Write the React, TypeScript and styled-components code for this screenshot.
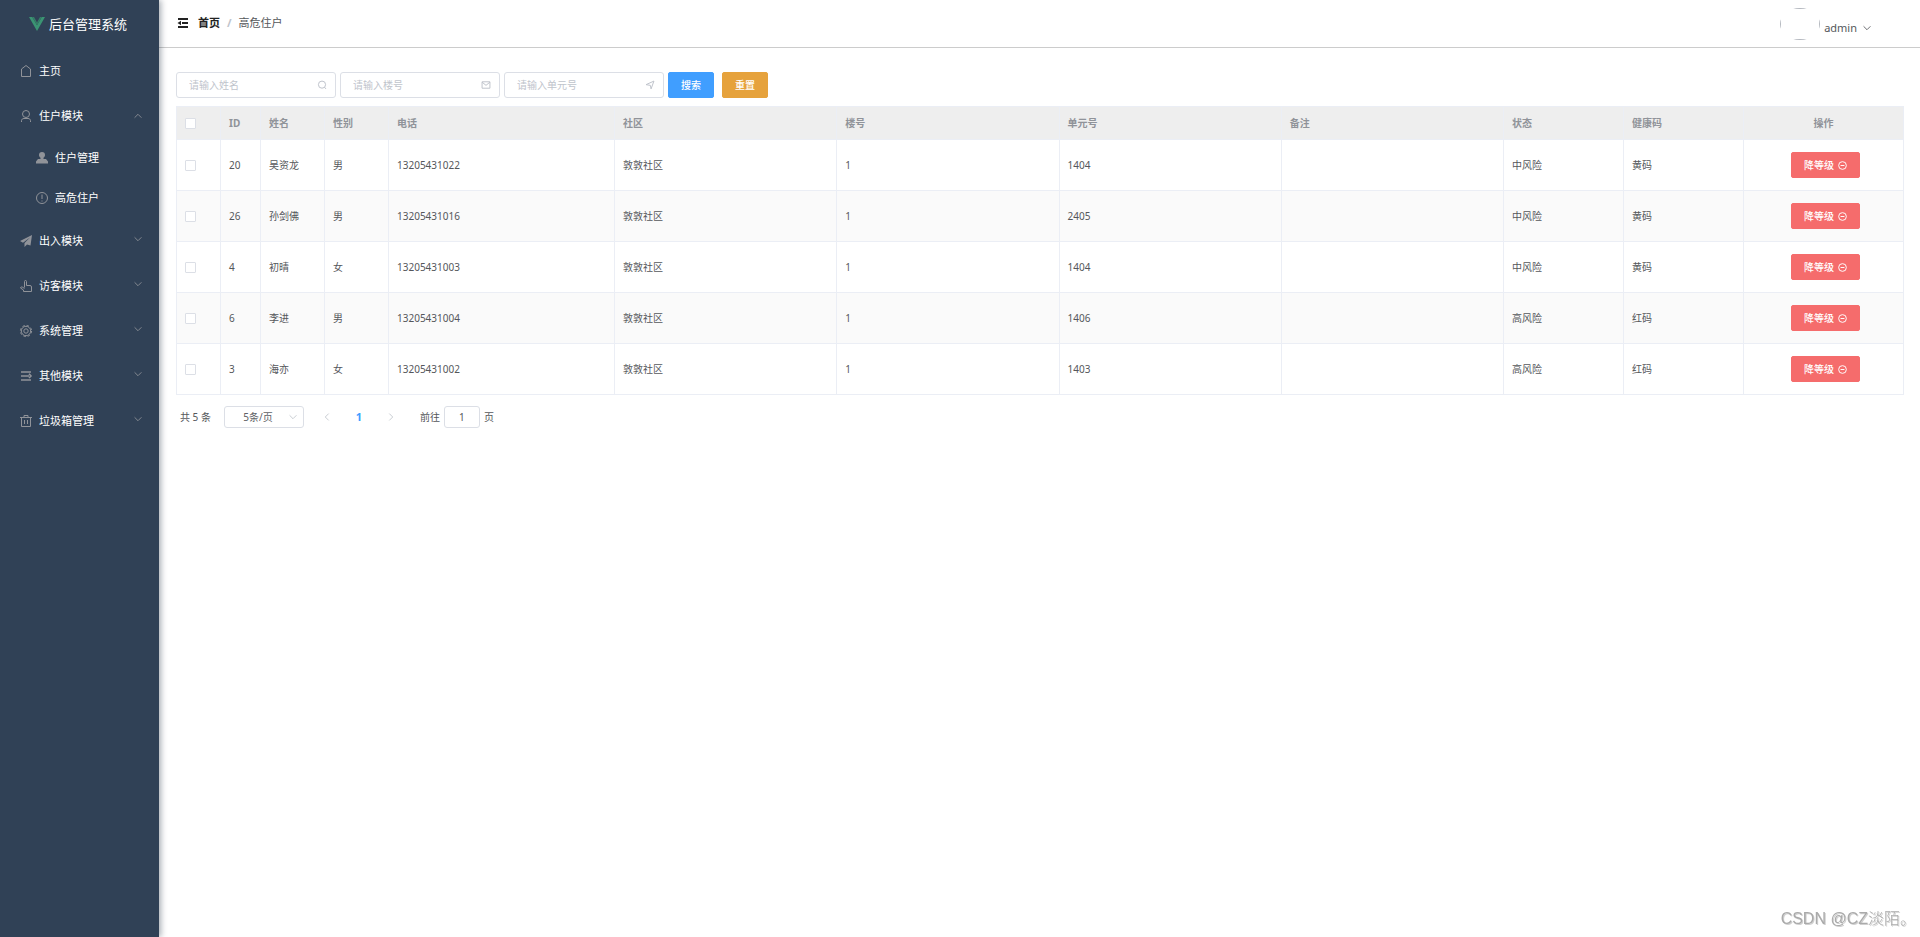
import React, { useState } from 'react';
import styled, { createGlobalStyle } from 'styled-components';

const GlobalStyle = createGlobalStyle`
  *, *::before, *::after { box-sizing: border-box; }
  html, body { margin: 0; padding: 0; }
  body {
    font-family: "Noto Sans", "Noto Sans CJK SC", sans-serif;
    font-size: 10px;
    line-height: 16px;
    color: #55575b;
    background: #fff;
  }
  button, input, select { font: inherit; color: inherit; margin: 0; }
  ul { list-style: none; margin: 0; padding: 0; }
  a { color: inherit; text-decoration: none; }
`;

/* ---------- icons ---------- */

const Svg = styled.svg<{ $size: number }>`
  display: block;
  flex: none;
  width: ${p => p.$size}px;
  height: ${p => p.$size}px;
  fill: none;
  stroke: currentColor;
  stroke-width: 1;
`;

type IconName =
  | 'home' | 'user' | 'userSolid' | 'warning' | 'promotion' | 'pointer' | 'setting'
  | 'operation' | 'trash' | 'up' | 'down' | 'left' | 'right' | 'search' | 'message'
  | 'position' | 'remove' | 'fold';

const solid = { fill: 'currentColor', stroke: 'none' };

const shapes: Record<IconName, React.ReactNode> = {
  home: <path d="M2.500 12.500V5L7 1.500 11.500 5v7.500z" />,
  user: (
    <>
      <circle cx="7" cy="5" r="3.500" />
      <path d="M2.500 13v-1.500c0-1 1-2 2.500-2h4c1.500 0 2.500 1 2.500 2V13" />
    </>
  ),
  userSolid: (
    <path {...solid} d="M7 1a3 3 0 0 1 3 3c0 1.300-.6 2.100-1.500 2.800V8H11l2 2.500V12.500H1V10.500L3 8h2.500V6.800C4.600 6.100 4 5.300 4 4a3 3 0 0 1 3-3z" />
  ),
  warning: (
    <>
      <circle cx="7" cy="7" r="5.500" />
      <path d="M7 3.500v4.500M7 9.500v1" />
    </>
  ),
  promotion: <path {...solid} d="M1 7 13 1l-1.500 10.500-3.500-1L5.500 13V9L11 3.500 4 8.800z" />,
  pointer: (
    <path d="M5.500 8.500V2.500a1 1 0 0 1 2 0v4h3.500a1.500 1.500 0 0 1 1.500 1.500v4.500h-8V11L1.500 9c0-1 1.500-1.500 2.500-.5l1.500 1" />
  ),
  setting: (
    <>
      <circle cx="7" cy="7" r="5.600" strokeDasharray="2.400 2" />
      <circle cx="7" cy="7" r="4.700" />
      <circle cx="7" cy="7" r="2.200" />
    </>
  ),
  operation: <path strokeWidth="1.600" d="M2 3h10M2 7h8M2 11h10M10 4.800 12 7l-2 2" />,
  trash: <path d="M1 3.500h12M5 3V1.500h4V3M2.500 3.500v9h9v-9M5.500 6v4M8.500 6v4" />,
  up: <path d="M3 9l4-4 4 4" />,
  down: <path d="M3 5l4 4 4-4" />,
  left: <path d="M9 3L5 7l4 4" />,
  right: <path d="M5 3l4 4-4 4" />,
  search: (
    <>
      <circle cx="7" cy="6.500" r="5" strokeWidth="1.400" />
      <path strokeWidth="1.400" d="M10.500 10l2 2.500" />
    </>
  ),
  message: <path strokeWidth="1.400" d="M1.500 2.500h11v9h-11zM1.500 3l5.500 4.500L12.500 3" />,
  position: <path strokeWidth="1.400" d="M1.500 6.500L12.500 1.500 8.500 12.500 7.500 7.500z" />,
  remove: (
    <>
      <circle cx="7" cy="7" r="6" strokeWidth="1.500" />
      <path strokeWidth="1.500" d="M4 7h6" />
    </>
  ),
  fold: (
    <>
      <path strokeWidth="2" d="M2 3h10M6 7h6M2 11h10" />
      <path {...solid} d="M1.500 7 5 4.800v4.400z" />
    </>
  ),
};

const Icon = ({ name, size = 14 }: { name: IconName; size?: number }) => (
  <Svg $size={size} viewBox="0 0 14 14" aria-hidden="true">{shapes[name]}</Svg>
);

/* ---------- shell ---------- */

const Shell = styled.div`
  display: flex;
  min-height: 100vh;
`;

const Sidebar = styled.aside`
  flex: none;
  width: 159px;
  background: #304156;
  box-shadow: 2px 0 6px rgba(0, 21, 41, 0.35);
  color: #fff;
  z-index: 1;
`;

const Brand = styled.div`
  display: flex;
  align-items: center;
  justify-content: center;
  gap: 4px;
  height: 48px;
  font-size: 13px;
  line-height: 20px;
  padding-right: 3px;
`;

const BrandMark = styled.svg`
  display: block;
  width: 16px;
  height: 14px;
`;

const MenuLink = styled.a<{ $nested?: boolean }>`
  display: flex;
  align-items: center;
  gap: 4px;
  height: ${p => (p.$nested ? 40 : 45)}px;
  padding: 0 15px 0 ${p => (p.$nested ? 32 : 16)}px;
  font-size: 11px;
`;

const MenuIcon = styled.span`
  display: flex;
  justify-content: center;
  width: 19px;
  color: #909399;
`;

const MenuArrow = styled.span<{ $open?: boolean }>`
  margin-left: auto;
  padding-bottom: ${p => (p.$open ? 0 : 4)}px;
  color: #909399;
`;

const Main = styled.div`
  flex: 1;
  min-width: 0;
`;

const Topbar = styled.header`
  display: flex;
  align-items: center;
  justify-content: space-between;
  height: 48px;
  padding: 0 47px 0 17px;
  border-bottom: 1px solid #ccc;
  font-size: 11px;
`;

const Crumbs = styled.nav`
  display: flex;
  align-items: center;
  padding-bottom: 2px;
`;

const FoldButton = styled.button`
  margin-right: 8px;
  padding: 0;
  border: 0;
  background: none;
  color: #222;
`;

const CrumbHome = styled.a`
  font-weight: 700;
  color: #222;
`;

const Slash = styled.span`
  margin: 0 7px;
  font-weight: 700;
  color: #c0c4cc;
`;

const UserMenu = styled.button`
  display: flex;
  align-items: center;
  gap: 4px;
  padding: 0;
  border: 0;
  background: none;
`;

const Avatar = styled.span`
  display: flex;
  width: 40px;
  height: 32px;
  border-radius: 50%;
  overflow: hidden;
`;

const AvatarFrame = styled.span`
  flex: 1;
  border: 1px solid #b4b8bf;
`;

const UserName = styled.span`
  display: flex;
  align-items: center;
  gap: 4px;
  padding-top: 8px;
`;

const Content = styled.main`
  padding: 24px 16px 24px 17px;
`;

/* ---------- filter bar ---------- */

const Filters = styled.form`
  display: flex;
  gap: 4px;
  margin-bottom: 8px;
`;

const Field = styled.label`
  display: flex;
  align-items: center;
  width: 160px;
  height: 26px;
  padding: 0 8px 0 12px;
  border: 1px solid #dcdfe6;
  border-radius: 3px;
  color: #c0c4cc;
`;

const FieldInput = styled.input`
  flex: 1;
  min-width: 0;
  padding: 0;
  border: 0;
  outline: 0;
  background: none;
  color: #606266;
  &::placeholder { color: #c0c4cc; opacity: 1; }
`;

const tones = { primary: '#409eff', warning: '#e6a23c', danger: '#f56c6c' };

const Button = styled.button<{ $tone: keyof typeof tones }>`
  display: inline-flex;
  align-items: center;
  gap: 4px;
  height: 26px;
  padding: 0 12px;
  border: 1px solid ${p => tones[p.$tone]};
  border-radius: 2px;
  background: ${p => tones[p.$tone]};
  color: #fff;
  font-weight: 500;
  & + & { margin-left: 4px; }
`;

/* ---------- table ---------- */

const Table = styled.table`
  width: 100%;
  table-layout: fixed;
  border-collapse: separate;
  border-spacing: 0;
  border-top: 1px solid #ebeef5;
  border-left: 1px solid #ebeef5;
`;

const Col = styled.col<{ $width?: number }>`
  ${p => p.$width && `width: ${p.$width}px;`}
`;

const HeadCell = styled.th<{ $center?: boolean }>`
  height: 33px;
  padding: 0 8px;
  border-right: 1px solid #ebeef5;
  border-bottom: 1px solid #ebeef5;
  background: #eee;
  color: #909399;
  font-weight: 700;
  text-align: ${p => (p.$center ? 'center' : 'left')};
`;

const Cell = styled.td<{ $center?: boolean }>`
  height: 51px;
  padding: 0 8px;
  border-right: 1px solid #ebeef5;
  border-bottom: 1px solid #ebeef5;
  text-align: ${p => (p.$center ? 'center' : 'left')};
`;

const Row = styled.tr`
  &:nth-child(even) { background: #fafafa; }
`;

const Check = styled.input.attrs({ type: 'checkbox' })`
  appearance: none;
  display: block;
  width: 11px;
  height: 11px;
  border: 1px solid #dcdfe6;
  border-radius: 1px;
  background: #fff;
  &:checked { background: #409eff; border-color: #409eff; }
`;

const Action = styled.div`
  display: flex;
  justify-content: center;
  padding-left: 4px;
`;

/* ---------- pagination ---------- */

const Pager = styled.nav`
  display: flex;
  align-items: center;
  margin-top: 11px;
  padding-left: 4px;
`;

const SizeBox = styled.div`
  display: grid;
  align-items: center;
  margin: 0 12px 0 13px;
  color: #c0c4cc;
  & > * { grid-area: 1 / 1; }
  & > svg { justify-self: end; margin-right: 5px; pointer-events: none; }
`;

const SizeSelect = styled.select`
  appearance: none;
  width: 80px;
  height: 22px;
  padding: 0 20px 0 8px;
  border: 1px solid #dcdfe6;
  border-radius: 3px;
  background: #fff;
  color: #606266;
  text-align: center;
  text-align-last: center;
`;

const PageButton = styled.button<{ $active?: boolean }>`
  display: flex;
  align-items: center;
  justify-content: center;
  width: 22px;
  height: 22px;
  padding: 0;
  border: 0;
  background: none;
  font-size: 11px;
  font-weight: 700;
  color: ${p => (p.$active ? '#409eff' : '#c0c4cc')};
`;

const PageList = styled.div`
  display: flex;
  gap: 10px;
  margin-right: 18px;
`;

const Jump = styled.label`
  display: flex;
  align-items: center;
  gap: 4px;
`;

const JumpInput = styled.input`
  width: 36px;
  height: 22px;
  padding: 0 2px;
  border: 1px solid #dcdfe6;
  border-radius: 3px;
  text-align: center;
`;

const Watermark = styled.div`
  position: fixed;
  right: 4px;
  bottom: 6px;
  font-family: "Liberation Sans", "Noto Sans CJK SC", sans-serif;
  font-size: 16px;
  font-weight: 300;
  line-height: 24px;
  color: #aaa;
  text-shadow: 1px 1px 0 rgba(120, 120, 120, 0.35);
`;

/* ---------- data ---------- */

const menu: { icon: IconName; label: string; open?: boolean; leaf?: boolean; children?: { icon: IconName; label: string }[] }[] = [
  { icon: 'home', label: '主页', leaf: true },
  {
    icon: 'user', label: '住户模块', open: true,
    children: [
      { icon: 'userSolid', label: '住户管理' },
      { icon: 'warning', label: '高危住户' },
    ],
  },
  { icon: 'promotion', label: '出入模块' },
  { icon: 'pointer', label: '访客模块' },
  { icon: 'setting', label: '系统管理' },
  { icon: 'operation', label: '其他模块' },
  { icon: 'trash', label: '垃圾箱管理' },
];

const columns: { title: string; width?: number }[] = [
  { title: 'ID', width: 40 },
  { title: '姓名', width: 64 },
  { title: '性别', width: 64 },
  { title: '电话', width: 226 },
  { title: '社区' },
  { title: '楼号' },
  { title: '单元号' },
  { title: '备注' },
  { title: '状态', width: 120 },
  { title: '健康码', width: 120 },
];

const residents = [
  ['20', '吴资龙', '男', '13205431022', '敦敦社区', '1', '1404', '', '中风险', '黄码'],
  ['26', '孙剑佛', '男', '13205431016', '敦敦社区', '1', '2405', '', '中风险', '黄码'],
  ['4', '初晴', '女', '13205431003', '敦敦社区', '1', '1404', '', '中风险', '黄码'],
  ['6', '李进', '男', '13205431004', '敦敦社区', '1', '1406', '', '高风险', '红码'],
  ['3', '海亦', '女', '13205431002', '敦敦社区', '1', '1403', '', '高风险', '红码'],
];

const filters: { label: string; icon: IconName }[] = [
  { label: '请输入姓名', icon: 'search' },
  { label: '请输入楼号', icon: 'message' },
  { label: '请输入单元号', icon: 'position' },
];

export default function App() {
  const [page, setPage] = useState('1');

  return (
    <>
      <GlobalStyle />
      <Shell>
        <Sidebar>
          <Brand>
            <BrandMark viewBox="0 0 16 14" aria-hidden="true">
              <path fill="#3b9473" d="M0 0h3.200L8 8.300 12.800 0H16L8 14z" />
              <path fill="#357f68" d="M3.200 0H5L8 5.500 11 0h1.800L8 8.300z" />
            </BrandMark>
            后台管理系统
          </Brand>
          <ul>
            {menu.map(item => (
              <li key={item.label}>
                <MenuLink href="#">
                  <MenuIcon><Icon name={item.icon} /></MenuIcon>
                  {item.label}
                  {!item.leaf && (
                    <MenuArrow $open={item.open}>
                      <Icon name={item.open ? 'up' : 'down'} size={12} />
                    </MenuArrow>
                  )}
                </MenuLink>
                {item.children && (
                  <ul>
                    {item.children.map(child => (
                      <li key={child.label}>
                        <MenuLink href="#" $nested>
                          <MenuIcon><Icon name={child.icon} /></MenuIcon>
                          {child.label}
                        </MenuLink>
                      </li>
                    ))}
                  </ul>
                )}
              </li>
            ))}
          </ul>
        </Sidebar>

        <Main>
          <Topbar>
            <Crumbs aria-label="breadcrumb">
              <FoldButton type="button" aria-label="menu"><Icon name="fold" /></FoldButton>
              <CrumbHome href="#">首页</CrumbHome>
              <Slash>/</Slash>
              <span>高危住户</span>
            </Crumbs>
            <UserMenu type="button">
              <Avatar><AvatarFrame /></Avatar>
              <UserName>admin <Icon name="down" size={12} /></UserName>
            </UserMenu>
          </Topbar>

          <Content>
            <Filters onSubmit={e => e.preventDefault()}>
              {filters.map(f => (
                <Field key={f.label}>
                  <FieldInput type="text" placeholder={f.label} aria-label={f.label} />
                  <Icon name={f.icon} size={10} />
                </Field>
              ))}
              <Button type="submit" $tone="primary">搜索</Button>
              <Button type="reset" $tone="warning">重置</Button>
            </Filters>

            <Table>
              <colgroup>
                <Col $width={44} />
                {columns.map(c => <Col key={c.title} $width={c.width} />)}
                <Col $width={160} />
              </colgroup>
              <thead>
                <tr>
                  <HeadCell><Check aria-label="全选" /></HeadCell>
                  {columns.map(c => <HeadCell key={c.title}>{c.title}</HeadCell>)}
                  <HeadCell $center>操作</HeadCell>
                </tr>
              </thead>
              <tbody>
                {residents.map(r => (
                  <Row key={r[0]}>
                    <Cell><Check aria-label={r[1]} /></Cell>
                    {r.map((value, i) => <Cell key={columns[i].title}>{value}</Cell>)}
                    <Cell $center>
                      <Action>
                        <Button type="button" $tone="danger">
                          降等级 <Icon name="remove" size={9} />
                        </Button>
                      </Action>
                    </Cell>
                  </Row>
                ))}
              </tbody>
            </Table>

            <Pager aria-label="pagination">
              <span>共 5 条</span>
              <SizeBox>
                <SizeSelect aria-label="每页条数" defaultValue="5">
                  <option value="5">5条/页</option>
                </SizeSelect>
                <Icon name="down" size={12} />
              </SizeBox>
              <PageList>
                <PageButton type="button" aria-label="上一页"><Icon name="left" size={12} /></PageButton>
                <PageButton type="button" $active>1</PageButton>
                <PageButton type="button" aria-label="下一页"><Icon name="right" size={12} /></PageButton>
              </PageList>
              <Jump>
                前往
                <JumpInput value={page} onChange={e => setPage(e.target.value)} />
                页
              </Jump>
            </Pager>
          </Content>
        </Main>
      </Shell>
      <Watermark>CSDN @CZ淡陌。</Watermark>
    </>
  );
}
